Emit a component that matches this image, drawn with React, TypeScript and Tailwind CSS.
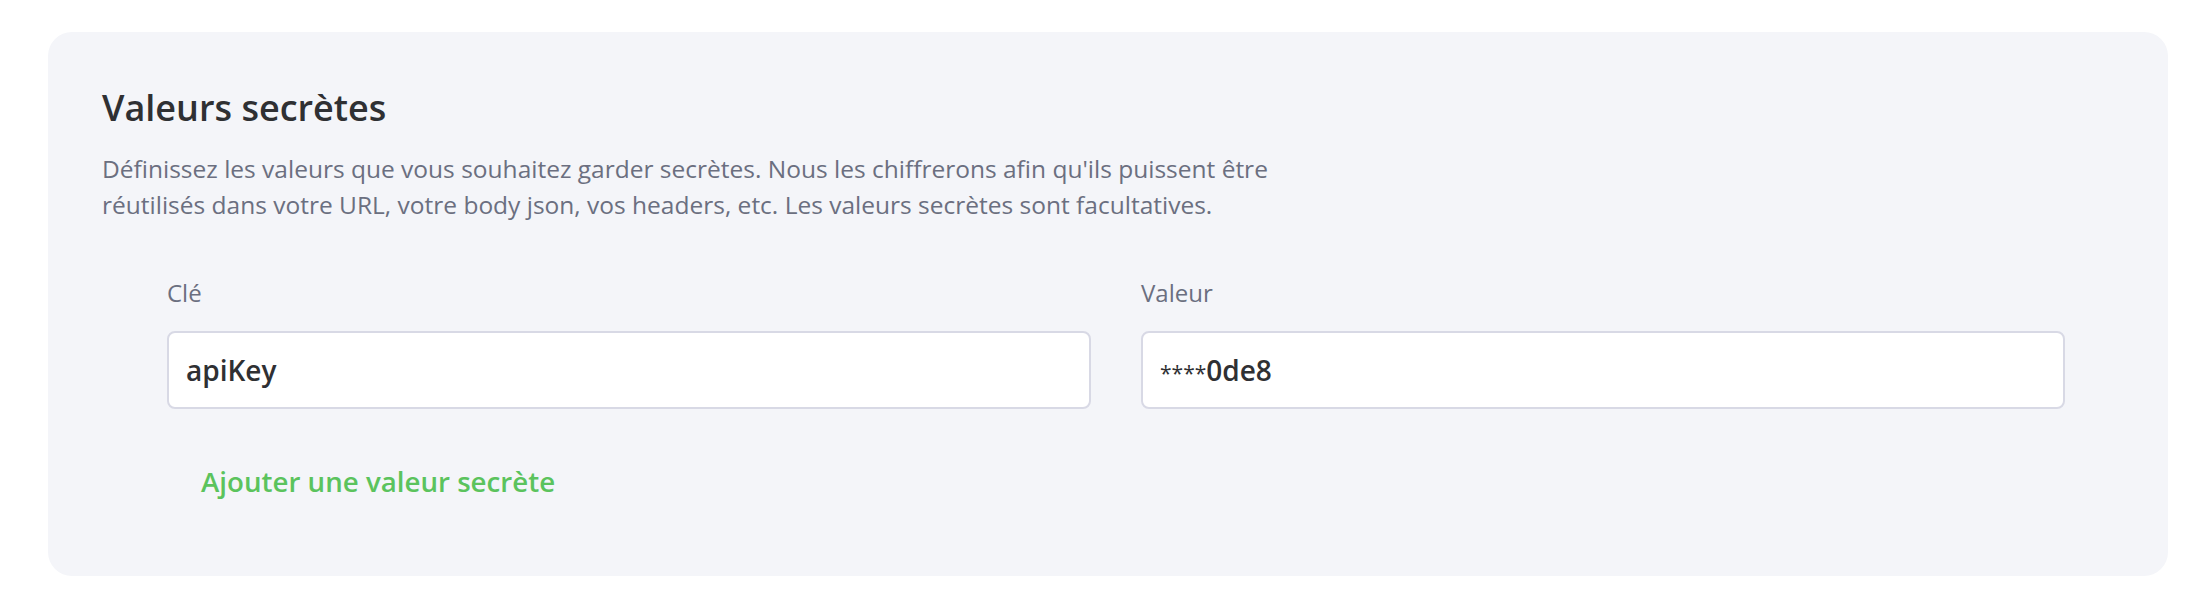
export default function App() {
  const fields = [
    { label: 'Clé', value: 'apiKey', mask: '' },
    { label: 'Valeur', value: '0de8', mask: '****' },
  ]

  return (
    <div className="min-h-screen bg-white pt-[32px] pl-[48px] font-['Open_Sans','Liberation_Sans',sans-serif]">
      <section className="w-[2120px] rounded-[24px] bg-[#f4f5f9] pt-[54px] pb-[77px] px-[54px]">
        <h2 className="text-[36px] leading-[44px] font-semibold text-[#2f3033]">Valeurs secrètes</h2>
        <p className="mt-[21px] text-[24.5px] leading-[36px] text-[#6b6f80]">
          Définissez les valeurs que vous souhaitez garder secrètes. Nous les chiffrerons afin qu'ils puissent être
          <br />
          réutilisés dans votre URL, votre body json, vos headers, etc. Les valeurs secrètes sont facultatives.
        </p>

        <div className="mt-[54px] ml-[65px] mr-[49px] flex gap-[50px]">
          {fields.map((f) => (
            <div key={f.label} className="flex-1">
              <label className="block text-[24px] leading-[32px] text-[#6b6f80]">{f.label}</label>
              <div className="mt-[22px] flex h-[78px] items-center rounded-[8px] border-2 border-[#d8d9e5] bg-white px-[17px]">
                <span className="text-[28px] font-semibold text-[#2f3033]">
                  {f.mask && <span className="text-[21px] font-normal">{f.mask}</span>}
                  {f.value}
                </span>
              </div>
            </div>
          ))}
        </div>

        <button className="mt-[54px] ml-[99px] block text-[27.7px] leading-[36px] font-semibold text-[#5bc35d]">
          Ajouter une valeur secrète
        </button>
      </section>
    </div>
  )
}
